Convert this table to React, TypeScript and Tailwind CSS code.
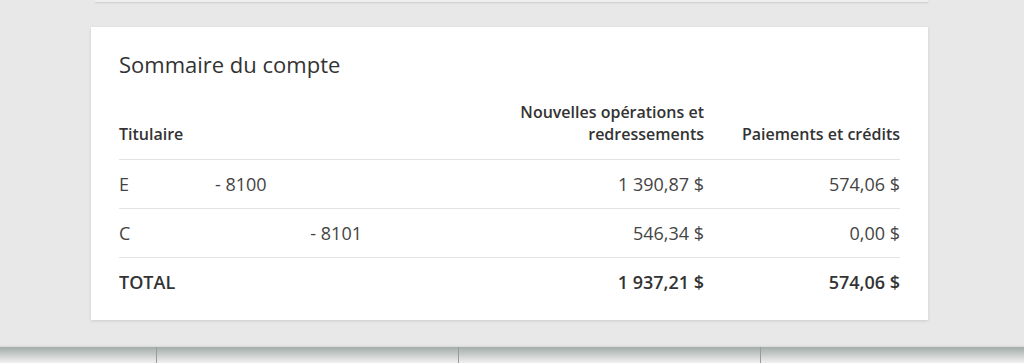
const rows = [
  { name: "E", gap: "pl-[86px]", account: "- 8100", ops: "1 390,87 $", paid: "574,06 $" },
  { name: "C", gap: "pl-[180px]", account: "- 8101", ops: "546,34 $", paid: "0,00 $" },
];

export default function App() {
  return (
    <div className="h-[363px] w-full overflow-hidden bg-[#e8e8e8] font-['Open_Sans',sans-serif] text-[#333]">
      {/* bas de la carte précédente */}
      <div className="ml-[95px] h-[2px] w-[833px] bg-[#efefef] shadow-[0_1px_2px_rgba(0,0,0,0.12)]" />

      {/* carte sommaire */}
      <section className="ml-[91px] mt-[25px] h-[293px] w-[837px] bg-white px-[28px] pt-[22px] shadow-[0_1px_3px_rgba(0,0,0,0.12)]">
        <h2 className="text-[22px] font-medium leading-[30px] text-[#333]">
          Sommaire du compte
        </h2>

        <div className="mt-[22px] grid grid-cols-[1fr_210px_196px] items-end border-b border-[#e3e3e3] pb-[14px] text-[16px] font-semibold leading-[22px] text-[#333]">
          <div>Titulaire</div>
          <div className="text-right">
            <span className="block">Nouvelles opérations et</span>
            <span className="block">redressements</span>
          </div>
          <div className="text-right">Paiements et crédits</div>
        </div>

        {rows.map((row) => (
          <div
            key={row.account}
            className="grid h-[49px] grid-cols-[1fr_210px_196px] items-center border-b border-[#e3e3e3] text-[18px] text-[#444]"
          >
            <div className="flex">
              <span>{row.name}</span>
              <span className={row.gap}>{row.account}</span>
            </div>
            <div className="text-right">{row.ops}</div>
            <div className="text-right">{row.paid}</div>
          </div>
        ))}

        <div className="grid h-[49px] grid-cols-[1fr_210px_196px] items-center text-[18px] font-semibold text-[#333]">
          <div>TOTAL</div>
          <div className="text-right">1 937,21 $</div>
          <div className="text-right">574,06 $</div>
        </div>
      </section>

      {/* barre du bas */}
      <div className="mt-[27px] flex h-[16px] bg-gradient-to-b from-[#a3aca8] to-[#f2f2f2] shadow-[0_-1px_2px_rgba(0,0,0,0.08)]">
        <div className="w-[157px] border-r border-[#9a9a9a]" />
        <div className="w-[302px] border-r border-[#9a9a9a]" />
        <div className="w-[302px] border-r border-[#9a9a9a]" />
        <div className="flex-1" />
      </div>
    </div>
  );
}
